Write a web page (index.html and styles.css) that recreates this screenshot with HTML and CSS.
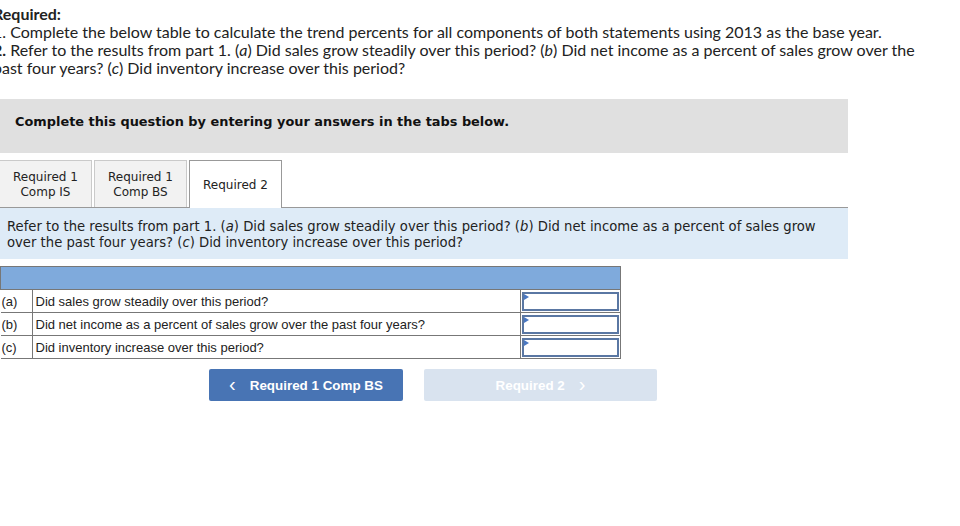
FILE: index.html
```html
<!DOCTYPE html>
<html>
<head>
<meta charset="utf-8">
<link rel="stylesheet" href="styles.css">
</head>
<body>
<div class="intro">
  <p class="req"><b>Required:</b></p>
  <p>1. Complete the below table to calculate the trend percents for all components of both statements using 2013 as the base year.</p>
  <p><b>2.</b> Refer to the results from part 1. (<i>a</i>) Did sales grow steadily over this period? (<i>b</i>) Did net income as a percent of sales grow over the past four years? (<i>c</i>) Did inventory increase over this period?</p>
</div>

<div class="banner">Complete this question by entering your answers in the tabs below.</div>

<div class="tabs">
  <div class="tab">Required 1<br>Comp IS</div>
  <div class="tab">Required 1<br>Comp BS</div>
  <div class="tab active">Required 2</div>
</div>

<div class="info">Refer to the results from part 1. (<i>a</i>) Did sales grow steadily over this period? (<i>b</i>) Did net income as a percent of sales grow over the past four years? (<i>c</i>) Did inventory increase over this period?</div>

<table class="qt">
  <tr class="head"><td colspan="3"></td></tr>
  <tr><td class="lbl">(a)</td><td class="q">Did sales grow steadily over this period?</td><td class="ans"><div class="box"></div></td></tr>
  <tr><td class="lbl">(b)</td><td class="q">Did net income as a percent of sales grow over the past four years?</td><td class="ans"><div class="box"></div></td></tr>
  <tr><td class="lbl">(c)</td><td class="q">Did inventory increase over this period?</td><td class="ans"><div class="box"></div></td></tr>
</table>

<div class="nav">
  <div class="btn prev"><span class="chev">&lsaquo;</span>Required 1 Comp BS</div>
  <div class="btn next">Required 2<span class="chev">&rsaquo;</span></div>
</div>
</body>
</html>
```
FILE: styles.css
```css
html, body { margin: 0; padding: 0; background: #fff; }
body { width: 960px; height: 526px; overflow: hidden; }

.intro {
  margin: 5px 0 0 -7px;
  width: 935px;
  font-family: Lato, "Open Sans", sans-serif;
  font-size: 16px;
  line-height: 18px;
  color: #222;
}
.intro p { margin: 0; }

.banner {
  margin-top: 22px;
  width: 833px;
  padding: 0 0 10px 15px;
  background: #e0e0e0;
  font-family: Verdana, "DejaVu Sans", sans-serif;
  font-weight: bold;
  font-size: 12.9px;
  color: #111;
  display: flex;
  align-items: center;
  height: 44px;
}

.tabs {
  margin-top: 7px;
  display: flex;
  gap: 2px;
  height: 47px;
  position: relative;
  z-index: 1;
}
.tab {
  width: 93px;
  border: 1px solid #cacaca;
  border-bottom: none;
  background: #f2f2f2;
  font-family: Verdana, "DejaVu Sans", sans-serif;
  font-size: 12px;
  line-height: 15px;
  color: #222;
  display: flex;
  align-items: center;
  justify-content: center;
  text-align: center;
  box-sizing: border-box;
  height: 47px;
  padding-top: 2px;
}
.tab:first-child { margin-left: -1px; }
.tab.active { background: #fff; border-color: #999; height: 48px; }

.info {
  width: 848px;
  height: 52px;
  border-top: 1px solid #999;
  background: #deebf7;
  padding: 11px 0 0 7px;
  box-sizing: border-box;
  font-family: Verdana, "DejaVu Sans", sans-serif;
  font-size: 13.2px;
  line-height: 16px;
  color: #222;
}

.qt {
  margin-top: 7px;
  border-collapse: collapse;
  width: 621px;
  font-family: Arial, "Liberation Sans", sans-serif;
  font-size: 13px;
  color: #222;
}
.qt tr { height: 23px; }
.qt td { border: 1px solid #777; padding: 0; line-height: 15px; }
.qt .head td { background: #7faadc; }
.qt .lbl { width: 30px; padding-left: 1px; border-left: none; }
.qt .q { padding-left: 3px; }
.qt .ans { width: 97px; padding: 1px; }
.box {
  height: 15px;
  border: 2px solid #5a77a3;
  position: relative;
}
.box::before {
  content: "";
  position: absolute;
  left: 0; top: 0;
  border-left: 5px solid #4a78c2;
  border-top: 3px solid transparent;
  border-bottom: 3px solid transparent;
}

.nav {
  margin-top: 10px;
  margin-left: 209px;
  display: flex;
  gap: 21px;
  font-family: Arial, "Liberation Sans", sans-serif;
  font-weight: bold;
  font-size: 13.4px;
  color: #fff;
}
.btn {
  height: 32px;
  border-radius: 2px;
  display: flex;
  align-items: center;
  justify-content: center;
}
.prev { width: 194px; background: #4874b4; }
.next { width: 233px; background: #d9e3ef; }
.chev { font-size: 20px; font-weight: normal; line-height: 1; margin-top: -3px; }
.prev .chev { margin-right: 14px; }
.next .chev { margin-left: 14px; }
```
